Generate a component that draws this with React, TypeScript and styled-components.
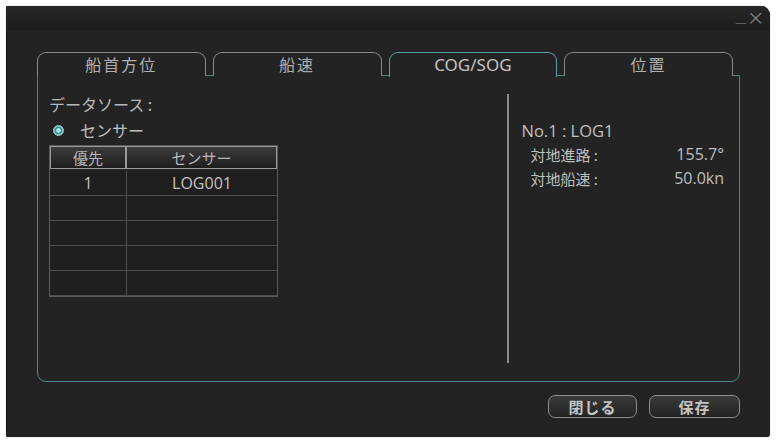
import React, { FC } from 'react';
import styled, { createGlobalStyle } from 'styled-components';

const GlobalStyle = createGlobalStyle`
    html, body {
        margin: 0;
        padding: 0;
        background: #ffffff;
    }
    body {
        font-family: "Noto Sans", "Noto Sans CJK JP", sans-serif;
    }
`;

const Screen = styled.div`
    width: 776px;
    height: 440px;
    padding: 6px 6px 3px 6px;
    box-sizing: border-box;
`;

const Window = styled.div`
    width: 764px;
    height: 431px;
    background: #232323;
    border-radius: 2px 9px 3px 2px;
    box-shadow: inset 1px 0 0 #161616, 0 0 1px #888;
    display: flex;
    flex-direction: column;
    overflow: hidden;
`;

const TitleBar = styled.div`
    height: 24px;
    flex: none;
    background: linear-gradient(#262626, #1d1d1d);
    display: flex;
    justify-content: flex-end;
    align-items: center;
    gap: 2px;
    padding-right: 5px;
    color: #8e8e8e;
    font-family: "DejaVu Sans", sans-serif;
    font-weight: 300;
`;

const Minimize = styled.span`
    font-size: 16px;
    line-height: 16px;
    transform: translateY(-3px) scaleX(1.3);
`;

const Close = styled.span`
    font-size: 22px;
    line-height: 22px;
`;

const Body = styled.div`
    flex: 1;
    padding: 22px 26px 19px 31px;
    display: flex;
    flex-direction: column;
`;

const TabRow = styled.div`
    display: flex;
    gap: 7px;
    width: 696px;
    height: 24px;
`;

const Tab = styled.div<{ $active?: boolean }>`
    position: relative;
    z-index: ${p => (p.$active ? 1 : 0)};
    flex: 1;
    height: ${p => (p.$active ? '25px' : '24px')};
    box-sizing: border-box;
    border: 1.5px solid ${p => (p.$active ? '#5f9ea2' : '#8a8a8a')};
    border-bottom: none;
    border-radius: 9px 9px 0 0;
    background: #232323;
    display: flex;
    align-items: center;
    justify-content: center;
    color: ${p => (p.$active ? '#c4c4c4' : '#b0b0b0')};
    font-family: "Noto Sans", "Noto Sans CJK JP", sans-serif;
    font-size: ${p => (p.$active ? '17px' : '16px')};
    font-weight: 400;
    letter-spacing: ${p => (p.$active ? '0' : '2px')};
    padding-bottom: 1px;
`;

const Panel = styled.div`
    width: 703px;
    height: 307px;
    box-sizing: border-box;
    margin-top: -1px;
    border: 1.5px solid #4f8486;
    border-radius: 0 0 9px 9px;
    display: flex;
    padding: 18px 0;
`;

const LeftPane = styled.div`
    width: 469px;
    padding-left: 11px;
    box-sizing: border-box;
    display: flex;
    flex-direction: column;
`;

const Label = styled.div`
    height: 20px;
    line-height: 20px;
    color: #b8b8b8;
    font-family: "Noto Sans CJK JP", sans-serif;
    font-size: 16px;
`;

const RadioRow = styled.div`
    height: 20px;
    margin-top: 6px;
    display: flex;
    align-items: center;
    gap: 16px;
    padding-left: 4px;
    color: #c0c0c0;
    font-family: "Noto Sans CJK JP", sans-serif;
    font-size: 16px;
`;

const RadioDot = styled.span`
    width: 11px;
    height: 11px;
    border-radius: 50%;
    box-sizing: border-box;
    border: 1px solid #8fd4d2;
    background: radial-gradient(circle, #a9e2e0 0 2px, #3f8c8c 2.6px 3.4px, #72c0bf 4px);
`;

const Table = styled.div`
    margin-top: 5px;
    width: 229px;
    display: grid;
    grid-template-columns: 76px 1fr;
    grid-auto-rows: 25px;
    border: 1px solid #5a5a5a;
    box-sizing: border-box;
`;

const HeadCell = styled.div`
    height: 23px;
    box-sizing: border-box;
    border: 1.5px solid #9a9a9a;
    border-top-width: 1px;
    background: linear-gradient(#3c3c3c, #1e1e1e);
    display: flex;
    align-items: center;
    justify-content: center;
    color: #b8b8b8;
    font-family: "Noto Sans CJK JP", sans-serif;
    font-size: 15px;
`;

const Cell = styled.div<{ $first?: boolean }>`
    box-sizing: border-box;
    border-bottom: 1px solid #4e4e4e;
    border-left: ${p => (p.$first ? 'none' : '1px solid #4e4e4e')};
    background: #1f1f1f;
    display: flex;
    align-items: center;
    justify-content: center;
    color: #c2c2c2;
    font-family: "Open Sans", sans-serif;
    font-size: 16px;
`;

const Divider = styled.div`
    width: 1.5px;
    background: #8a8a8a;
`;

const RightPane = styled.div`
    flex: 1;
    padding: 26px 15px 0 13px;
    display: flex;
    flex-direction: column;
`;

const SourceName = styled.div`
    height: 22px;
    line-height: 22px;
    color: #c0c0c0;
    font-family: "Open Sans", sans-serif;
    font-size: 16.5px;
`;

const InfoRow = styled.div`
    height: 24px;
    display: flex;
    align-items: center;
    justify-content: space-between;
    padding-left: 9px;
    color: #bebebe;
`;

const InfoKey = styled.span`
    font-family: "Noto Sans CJK JP", sans-serif;
    font-size: 15px;
`;

const InfoValue = styled.span`
    font-family: "Open Sans", sans-serif;
    font-size: 16px;
`;

const ButtonRow = styled.div`
    width: 703px;
    margin-top: 13px;
    display: flex;
    justify-content: flex-end;
    gap: 12px;
`;

const Button = styled.div<{ $w: number }>`
    width: ${p => p.$w}px;
    height: 23px;
    box-sizing: border-box;
    border: 1.5px solid #8e8e8e;
    border-radius: 7px;
    background: linear-gradient(#3a3a3a, #232323);
    display: flex;
    align-items: center;
    justify-content: center;
    color: #c4c4c4;
    font-family: "Noto Sans CJK JP", sans-serif;
    font-size: 15px;
    font-weight: 700;
    letter-spacing: 1px;
`;

const tabs = ['船首方位', '船速', 'COG/SOG', '位置'];
const rows = [['1', 'LOG001'], ['', ''], ['', ''], ['', ''], ['', '']];

const App: FC = () => (
    <>
    <GlobalStyle />
    <Screen>
    <Window>
        <TitleBar>
        <Minimize>_</Minimize>
        <Close>×</Close>
        </TitleBar>
        <Body>
        <TabRow>
            {tabs.map((t, i) => (
            <Tab key={t} $active={i === 2}>{t}</Tab>
            ))}
        </TabRow>

        <Panel>
            <LeftPane>
            <Label>データソース :</Label>
            <RadioRow>
                <RadioDot />
                センサー
            </RadioRow>
            <Table>
                <HeadCell>優先</HeadCell>
                <HeadCell>センサー</HeadCell>
                {rows.map((r, i) => (
                <React.Fragment key={i}>
                    <Cell $first>{r[0]}</Cell>
                    <Cell>{r[1]}</Cell>
                </React.Fragment>
                ))}
            </Table>
            </LeftPane>

            <Divider />

            <RightPane>
            <SourceName>No.1 : LOG1</SourceName>
            <InfoRow>
                <InfoKey>対地進路 :</InfoKey>
                <InfoValue>155.7°</InfoValue>
            </InfoRow>
            <InfoRow>
                <InfoKey>対地船速 :</InfoKey>
                <InfoValue>50.0kn</InfoValue>
            </InfoRow>
            </RightPane>
        </Panel>

        <ButtonRow>
            <Button $w={89}>閉じる</Button>
            <Button $w={91}>保存</Button>
        </ButtonRow>
        </Body>
    </Window>
    </Screen>
    </>
);

export default App;
